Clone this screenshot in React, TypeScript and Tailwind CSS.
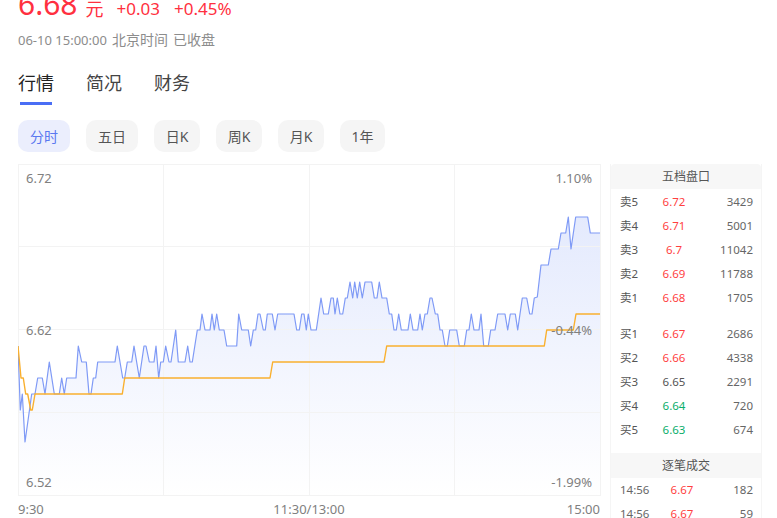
import React from 'react';

const priceLine: number[][] = [
  [18, 346], [20.3, 410], [22.3, 394], [25, 442], [31.7, 394], [35, 394], [37.7, 378], [42.3, 378], [45, 394], [49.3, 362],
  [54.3, 394], [59.3, 394], [61.7, 378], [64.3, 394], [66.7, 378], [76, 378], [78.3, 346], [81.7, 362], [86.3, 362], [89, 394],
  [91, 394], [93.3, 378], [95.7, 378], [97.7, 362], [115, 362], [117.3, 346], [122.7, 378], [124.7, 378], [127.3, 362], [131.7, 362],
  [134, 346], [139.3, 378], [144, 346], [146, 346], [149.3, 362], [154, 362], [156, 346], [158.7, 378], [160.7, 362], [163.3, 362],
  [165.7, 346], [169, 362], [171, 362], [175.7, 330], [178.3, 362], [185, 362], [187.7, 346], [190, 362], [192.3, 362], [197.3, 330],
  [200, 330], [202, 314], [205, 330], [210, 330], [212, 314], [214.3, 330], [216.7, 314], [219.3, 330], [224, 330], [226.7, 346],
  [236.7, 346], [238.7, 314], [241.7, 330], [248.3, 330], [250.7, 346], [253.3, 330], [255.7, 330], [258, 314], [260, 314], [263.3, 330],
  [265.3, 330], [267.3, 314], [272.3, 314], [275, 330], [277.7, 314], [294, 314], [296.7, 330], [299.3, 330], [301.7, 314], [304, 314],
  [306.3, 330], [308.3, 314], [311, 330], [316.3, 330], [321, 298], [323.7, 314], [328.3, 314], [331, 298], [333.3, 298], [335, 314],
  [337.3, 298], [340, 314], [342.7, 314], [345.3, 298], [347.3, 298], [350, 282], [352.7, 298], [354.7, 282], [357.3, 298], [359.7, 282],
  [362.3, 298], [365, 282], [371.7, 282], [374.3, 298], [377, 298], [379.3, 282], [382, 298], [386.7, 298], [389.3, 314], [391.7, 314],
  [394, 330], [396.3, 330], [398.7, 314], [401.3, 330], [408, 330], [410.3, 314], [413, 330], [417.7, 330], [420, 314], [422.3, 330],
  [425, 314], [427.3, 314], [430, 298], [432, 298], [435.3, 314], [437.7, 314], [440, 330], [442.3, 330], [445, 346], [447.3, 346],
  [449.7, 330], [456.7, 330], [459.3, 346], [464.3, 346], [466.7, 330], [469, 330], [471.3, 314], [474, 330], [479, 330], [481, 314],
  [483.7, 346], [488.3, 346], [490.7, 330], [495, 330], [497.7, 314], [505, 314], [507.7, 330], [510.3, 314], [515.3, 314], [517.7, 330],
  [522.3, 298], [526.7, 298], [529.7, 314], [532, 314], [534.3, 298], [537.3, 297], [541, 265], [548.3, 265], [551, 249], [558.3, 249],
  [561, 233], [565.7, 233], [568.3, 217], [571, 249], [575.7, 217], [587.7, 217], [590.3, 233], [600, 233],
];

const avgLine: number[][] = [
  [18, 346], [21, 378], [23.3, 378], [25.7, 394], [27.7, 394], [30.7, 410], [32.3, 410], [35, 394], [122.3, 394], [124.7, 378],
  [270, 378], [272.7, 362], [384, 362], [386.7, 346], [544.3, 346], [546.7, 330], [573.3, 330], [576, 314], [600, 314],
];

const toPoints = (line: number[][]) => line.map(([x, y]) => `${x},${y}`).join(' ');

const sells = [
  { label: '卖5', price: '6.72', vol: '3429', color: 'text-[#ff3f3f]' },
  { label: '卖4', price: '6.71', vol: '5001', color: 'text-[#ff3f3f]' },
  { label: '卖3', price: '6.7', vol: '11042', color: 'text-[#ff3f3f]' },
  { label: '卖2', price: '6.69', vol: '11788', color: 'text-[#ff3f3f]' },
  { label: '卖1', price: '6.68', vol: '1705', color: 'text-[#ff3f3f]' },
];

const buys = [
  { label: '买1', price: '6.67', vol: '2686', color: 'text-[#ff3f3f]' },
  { label: '买2', price: '6.66', vol: '4338', color: 'text-[#ff3f3f]' },
  { label: '买3', price: '6.65', vol: '2291', color: 'text-[#555555]' },
  { label: '买4', price: '6.64', vol: '720', color: 'text-[#0aae6b]' },
  { label: '买5', price: '6.63', vol: '674', color: 'text-[#0aae6b]' },
];

const ranges = [
  { name: '分时', width: 'w-[52px]', active: true },
  { name: '五日', width: 'w-[52px]', active: false },
  { name: '日K', width: 'w-[46px]', active: false },
  { name: '周K', width: 'w-[46px]', active: false },
  { name: '月K', width: 'w-[46px]', active: false },
  { name: '1年', width: 'w-[45px]', active: false },
];

function BookRow({ label, price, vol, color }: { label: string; price: string; vol: string; color: string }) {
  return (
    <div className="grid h-6 grid-cols-[30px_48px_1fr] items-center text-[11.5px]">
      <span className="text-[#555555]">{label}</span>
      <span className={`text-center ${color}`}>{price}</span>
      <span className="text-right text-[#666666]">{vol}</span>
    </div>
  );
}

function TradeRow({ time, price, vol }: { time: string; price: string; vol: string }) {
  return (
    <div className="grid h-6 grid-cols-[38px_48px_1fr] items-center text-[11.5px]">
      <span className="text-[#666666]">{time}</span>
      <span className="text-center text-[#ff3f3f]">{price}</span>
      <span className="text-right text-[#666666]">{vol}</span>
    </div>
  );
}

export default function App() {
  return (
    <div className="h-[518px] w-[777px] overflow-hidden bg-white pl-[18px] pr-[15px] font-['Noto_Sans','Noto_Sans_CJK_SC',sans-serif]">
      {/* quote header, cut off by the top of the window */}
      <div className="-mt-[16px] flex h-[40px] items-end text-[#ff3040]">
        <span className="text-[30px] leading-[40px]">6.68</span>
        <span className="ml-[8px] text-[18px] leading-[30px]">元</span>
        <span className="ml-[13px] text-[17px] leading-[30px]">+0.03</span>
        <span className="ml-[14px] text-[17px] leading-[30px]">+0.45%</span>
      </div>
      <div className="mt-[6px] text-[14px] leading-[20px] text-[#8c8c8c]">
        <span className="text-[13px]">06-10 15:00:00</span>
        <span className="ml-[5px]">北京时间</span>
        <span className="ml-[5px]">已收盘</span>
      </div>

      <div className="mt-[19px] flex gap-[32px] text-[18px] leading-[28px] text-[#444444]">
        <div className="flex flex-col items-center">
          <span className="text-[#222222]">行情</span>
          <span className="mt-[5px] h-[3px] w-[32px] bg-[#4a6ef5]" />
        </div>
        <span>简况</span>
        <span>财务</span>
      </div>

      <div className="mt-[15px] flex gap-4">
        {ranges.map((r) => (
          <div
            key={r.name}
            className={`flex h-8 items-center justify-center rounded-[10px] text-[14px] ${r.width} ${
              r.active ? 'bg-[#ebeefd] text-[#5a78f0]' : 'bg-[#f5f5f5] text-[#555555]'
            }`}
          >
            {r.name}
          </div>
        ))}
      </div>

      <div className="mt-3 flex gap-[9px]">
        <div className="w-[583px] shrink-0">
          <div className="relative h-[332px] text-[13px] leading-[20px] text-[#808080]">
            <svg width="583" height="332" viewBox="18 164 583 332" className="block">
              <defs>
                <linearGradient id="areaFill" x1="0" y1="217" x2="0" y2="495" gradientUnits="userSpaceOnUse">
                  <stop offset="0" stopColor="#e4eafd" />
                  <stop offset="1" stopColor="#ffffff" />
                </linearGradient>
              </defs>
              <polygon points={`${toPoints(priceLine)} 600,495 18,495`} fill="url(#areaFill)" />
              <g stroke="#f3f3f3" strokeWidth="1" fill="none">
                <rect x="18.5" y="164.5" width="582" height="331" />
                <path d="M18 246.5H600M18 329.5H600M18 412.5H600M163.5 164V495M309.5 164V495M454.5 164V495" />
              </g>
              <polyline points={toPoints(priceLine)} fill="none" stroke="#7f9af6" strokeWidth="1.2" strokeLinejoin="round" />
              <polyline points={toPoints(avgLine)} fill="none" stroke="#f9b02f" strokeWidth="1.4" strokeLinejoin="round" />
            </svg>
            <span className="absolute left-2 top-[4px]">6.72</span>
            <span className="absolute right-[9px] top-[4px]">1.10%</span>
            <span className="absolute left-2 top-[156px]">6.62</span>
            <span className="absolute right-[9px] top-[156px]">-0.44%</span>
            <span className="absolute left-2 top-[308px]">6.52</span>
            <span className="absolute right-[9px] top-[308px]">-1.99%</span>
          </div>
          <div className="mt-[3px] grid grid-cols-3 pr-px text-[13px] leading-[20px] text-[#808080]">
            <span>9:30</span>
            <span className="text-center">11:30/13:00</span>
            <span className="text-right">15:00</span>
          </div>
        </div>

        <div className="w-[152px] shrink-0 border-x border-[#f5f5f5] text-[12px]">
          <div className="flex h-[25px] items-center justify-center rounded-t-[4px] bg-[#f7f7f7] text-[#555555]">五档盘口</div>
          <div className="mt-[1px] pl-[9px] pr-[8px]">
            {sells.map((row) => (
              <BookRow key={row.label} {...row} />
            ))}
          </div>
          <div className="mt-3 pl-[9px] pr-[8px]">
            {buys.map((row) => (
              <BookRow key={row.label} {...row} />
            ))}
          </div>
          <div className="mt-[11px] flex h-[25px] items-center justify-center bg-[#f7f7f7] text-[#555555]">逐笔成交</div>
          <div className="pl-[9px] pr-[8px]">
            <TradeRow time="14:56" price="6.67" vol="182" />
            <TradeRow time="14:56" price="6.67" vol="59" />
          </div>
        </div>
      </div>
    </div>
  );
}
